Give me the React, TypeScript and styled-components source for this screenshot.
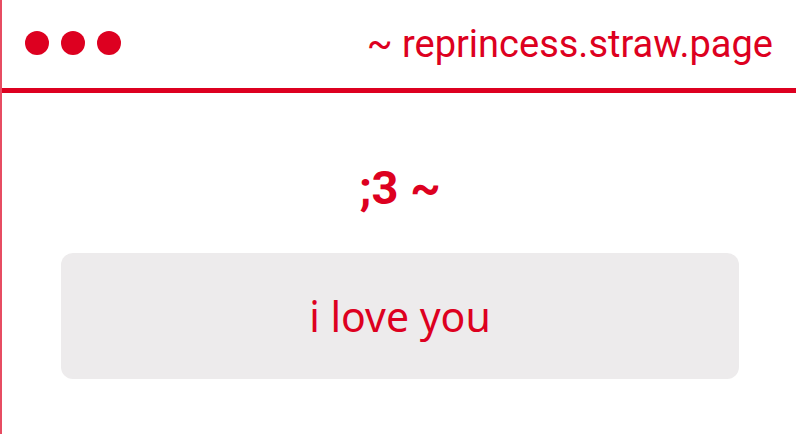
import styled, { createGlobalStyle } from "styled-components";

const RED = "#dd0020";

const GlobalStyle = createGlobalStyle`
  html, body {
    margin: 0;
    padding: 0;
    background: #ffffff;
    overflow: hidden;
  }
  body {
    font-family: Roboto, "Noto Sans", sans-serif;
  }
`;

const Window = styled.div`
  width: 800px;
  height: 434px;
  box-sizing: border-box;
  border-left: 2px solid rgba(221, 0, 32, 0.7);
  background: #ffffff;
  display: flex;
  flex-direction: column;
`;

const TitleBar = styled.header`
  height: 88px;
  border-bottom: 5px solid ${RED};
  display: flex;
  align-items: center;
  justify-content: space-between;
  padding: 0 27px 0 23px;
`;

const Dots = styled.div`
  display: flex;
  gap: 12px;
  margin-top: -2px;
`;

const Dot = styled.span`
  width: 24px;
  height: 24px;
  border-radius: 50%;
  background: ${RED};
`;

const Address = styled.span`
  font-family: Roboto, sans-serif;
  font-size: 38px;
  color: ${RED};
`;

const Content = styled.main`
  display: flex;
  flex-direction: column;
  align-items: stretch;
  padding: 67px 61px 0 59px;
`;

const Heading = styled.h1`
  margin: 0;
  text-align: center;
  font-family: Roboto, sans-serif;
  font-weight: 700;
  font-size: 47px;
  line-height: 56px;
  color: ${RED};
`;

const LoveButton = styled.button`
  margin-top: 37px;
  height: 126px;
  border: none;
  border-radius: 12px;
  background: #edebec;
  color: ${RED};
  font-family: "Noto Sans", sans-serif;
  font-size: 41px;
  cursor: pointer;
`;

export default function App() {
  return (
    <>
      <GlobalStyle />
      <Window>
        <TitleBar>
          <Dots>
            <Dot />
            <Dot />
            <Dot />
          </Dots>
          <Address>~ reprincess.straw.page</Address>
        </TitleBar>
        <Content>
          <Heading>;3 ~</Heading>
          <LoveButton>i love you</LoveButton>
        </Content>
      </Window>
    </>
  );
}
